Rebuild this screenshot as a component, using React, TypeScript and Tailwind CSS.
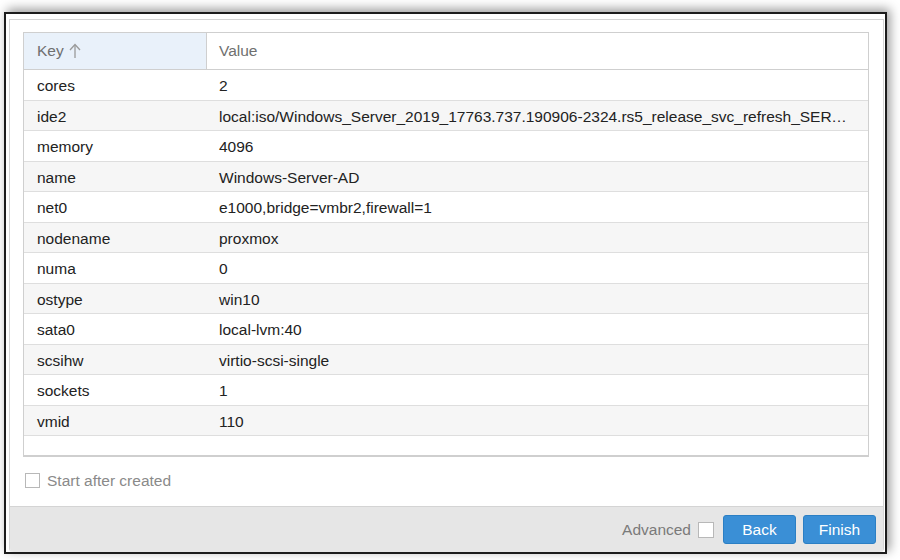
import React from "react";

const rows: [string, string][] = [
  ["cores", "2"],
  ["ide2", "local:iso/Windows_Server_2019_17763.737.190906-2324.rs5_release_svc_refresh_SERVER_EVAL_x64FRE_en-us_1.iso,media=cdrom"],
  ["memory", "4096"],
  ["name", "Windows-Server-AD"],
  ["net0", "e1000,bridge=vmbr2,firewall=1"],
  ["nodename", "proxmox"],
  ["numa", "0"],
  ["ostype", "win10"],
  ["sata0", "local-lvm:40"],
  ["scsihw", "virtio-scsi-single"],
  ["sockets", "1"],
  ["vmid", "110"],
];

function ArrowUp() {
  return (
    <svg width="12" height="16" viewBox="0 0 12 16" fill="none" stroke="#9a9a9a" strokeWidth="1.3">
      <path d="M6 15V2" />
      <path d="M1 7l5-5.5L11 7" />
    </svg>
  );
}

export default function App() {
  return (
    <div className="h-[560px] w-[900px] bg-white pl-[4px] pt-[12px] font-['Liberation_Sans',Arial,sans-serif]">
      <div className="h-[542px] w-[883px] border-2 border-[#1c1c1c] bg-white pl-[3px] pr-[1px] pt-[5px] shadow-[3px_-3px_10px_rgba(0,0,0,0.4)]">
        <div className="flex h-full flex-col rounded-b-[4px] border border-[#d4d4d4] border-b-0">
          <div className="flex-1 pl-[13px] pt-[12px]">
            <div className="w-[846px] border border-b-2 border-[#cfcfcf]">
              <div className="flex h-[37px] border-b border-[#cfcfcf] text-[15.5px] text-[#6f6f6f]">
                <div className="flex w-[183px] items-center gap-[5px] border-r border-[#cfcfcf] bg-[#e9f1fa] pl-[13px]">
                  Key
                  <ArrowUp />
                </div>
                <div className="flex flex-1 items-center pl-[12px]">Value</div>
              </div>
              {rows.map(([k, v], i) => (
                <div
                  key={k}
                  className={`flex h-[30.5px] items-center border-b border-[#dedede] pt-[2px] text-[15.5px] text-[#222] ${
                    i % 2 === 1 ? "bg-[#f6f6f6]" : "bg-white"
                  }`}
                >
                  <div className="w-[183px] pl-[13px]">{k}</div>
                  <div className="min-w-0 flex-1 truncate pl-[12px] pr-[14px]">{v}</div>
                </div>
              ))}
              <div className="h-[19px] bg-white" />
            </div>
            <div className="mt-[12px] flex items-center gap-[7px] pl-[2px] text-[15.5px] text-[#8a8a8a]">
              <span className="h-[15px] w-[15px] border border-[#b8b8b8] bg-white" />
              Start after created
            </div>
          </div>
          <div className="flex h-[46px] items-center justify-end gap-[7px] rounded-b-[4px] border-t border-[#d4d4d4] bg-[#e6e6e6] pr-[7px]">
            <span className="text-[15.5px] text-[#7a7a7a]">Advanced</span>
            <span className="mr-[2px] h-[16px] w-[16px] border border-[#b8b8b8] bg-white" />
            <button className="h-[29px] w-[73px] rounded-[3px] border border-[#2b7fc4] bg-[#3a8fd6] text-[15.5px] text-white">
              Back
            </button>
            <button className="h-[29px] w-[73px] rounded-[3px] border border-[#2b7fc4] bg-[#3a8fd6] text-[15.5px] text-white">
              Finish
            </button>
          </div>
        </div>
      </div>
    </div>
  );
}
